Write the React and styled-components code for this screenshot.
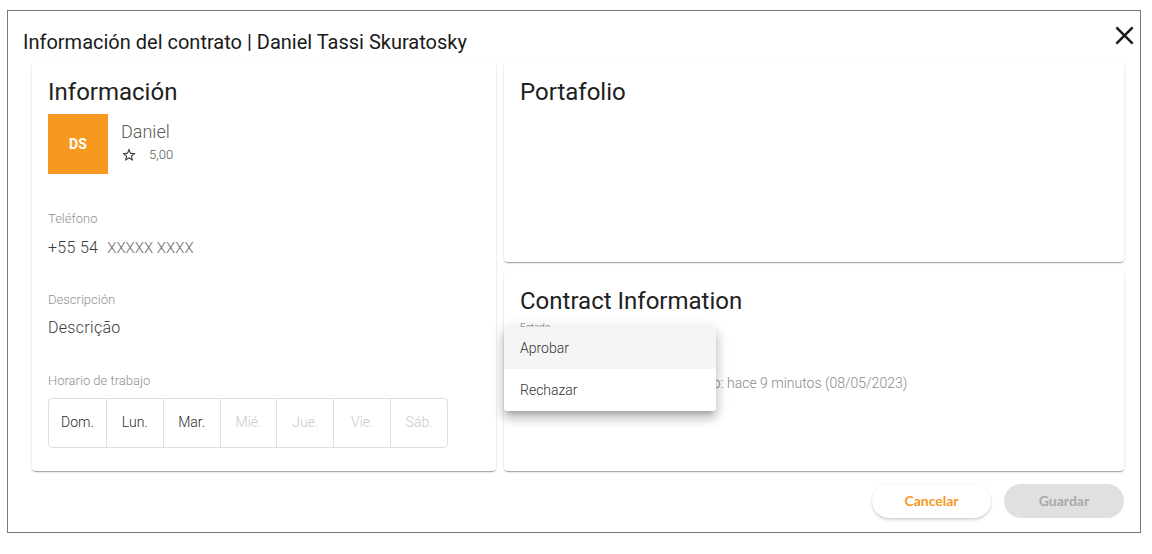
import React from "react";
import styled, { createGlobalStyle } from "styled-components";

const GlobalStyle = createGlobalStyle`
  html, body { margin: 0; padding: 0; background: #ffffff; }
  body { font-family: Roboto, "Liberation Sans", Arial, sans-serif; color: rgba(0,0,0,0.87); }
  * { box-sizing: border-box; }
`;

const Page = styled.div`
  padding: 10px 0 0 7px;
`;

const Dialog = styled.div`
  width: 1134px;
  border: 1px solid #7a7a7a;
  background: #fff;
  display: flex;
  flex-direction: column;
`;

const Header = styled.div`
  display: flex;
  align-items: center;
  justify-content: space-between;
  height: 51px;
  padding: 10px 0 0 15px;
`;

const Title = styled.h2`
  margin: 0;
  font-size: 20px;
  font-weight: 400;
  line-height: 22px;
  color: #1a1a1a;
`;

const CloseButton = styled.button`
  border: none;
  background: transparent;
  padding: 0;
  width: 32px;
  height: 32px;
  display: flex;
  align-items: center;
  justify-content: center;
  cursor: pointer;
  color: #1c1c1c;
  margin-top: -12px;
`;

const Content = styled.div`
  display: grid;
  grid-template-columns: 464px 620px;
  column-gap: 8px;
  height: 409px;
  padding: 0 16px 0 24px;
`;

const RightColumn = styled.div`
  display: flex;
  flex-direction: column;
  gap: 9px;
`;

const Card = styled.div`
  position: relative;
  background: #fff;
  border-radius: 4px;
  padding: 16px;
  flex: 1;
  box-shadow: 0px 2px 1px -1px rgba(0,0,0,0.2), 0px 1px 1px 0px rgba(0,0,0,0.14), 0px 1px 3px 0px rgba(0,0,0,0.12);
`;

const CardTitle = styled.h3`
  margin: 0;
  font-size: 24px;
  font-weight: 400;
  line-height: 29px;
  color: #212121;
`;

const Profile = styled.div`
  display: flex;
  margin-top: 7px;
`;

const Avatar = styled.div`
  width: 60px;
  height: 60px;
  background: #f7991e;
  color: #fff;
  font-weight: 700;
  font-size: 14px;
  display: flex;
  align-items: center;
  justify-content: center;
  letter-spacing: 0.2px;
`;

const ProfileInfo = styled.div`
  margin-left: 13px;
  padding-top: 7px;
`;

const Name = styled.div`
  font-size: 18px;
  font-weight: 300;
  line-height: 22px;
  color: #5a5a5a;
`;

const Rating = styled.div`
  display: flex;
  align-items: center;
  margin-top: 3px;
  font-size: 13px;
  font-weight: 300;
  color: #555;
  gap: 12px;
  line-height: 18px;
`;

const Field = styled.div`
  margin-top: ${(p) => p.$top}px;
`;

const Label = styled.div`
  font-size: 13px;
  font-weight: 300;
  line-height: 16px;
  color: #8f8f8f;
`;

const Value = styled.div`
  margin-top: ${(p) => p.$gap || 11}px;
  font-size: 16px;
  font-weight: 300;
  line-height: 20px;
  color: #3a3a3a;
  letter-spacing: 0.3px;
`;

const Masked = styled.span`
  font-size: 15px;
  color: #6d6d6d;
  margin-left: 9px;
  letter-spacing: 0;
`;

const Days = styled.div`
  display: grid;
  grid-template-columns: repeat(7, 1fr);
  width: 400px;
  height: 50px;
  margin-top: 9px;
  border: 1px solid #dedede;
  border-radius: 4px;
`;

const Day = styled.div`
  display: flex;
  align-items: center;
  justify-content: center;
  padding-bottom: 3px;
  font-size: 14px;
  font-weight: 300;
  color: ${(p) => (p.$active ? "#2b2b2b" : "#c9c9c9")};
  border-left: ${(p) => (p.$first ? "none" : "1px solid #dedede")};
`;

const SmallLabel = styled.div`
  margin-top: 6px;
  font-size: 10px;
  font-weight: 300;
  line-height: 12px;
  color: #777;
`;

const SelectSpace = styled.div`
  height: 38px;
`;

const Updated = styled.div`
  font-size: 14px;
  font-weight: 300;
  line-height: 18px;
  color: #8a8a8a;
  margin-top: 2px;
`;

const Menu = styled.ul`
  position: absolute;
  left: 0;
  top: 56px;
  width: 212px;
  margin: 0;
  padding: 0;
  list-style: none;
  background: #fff;
  border-radius: 4px;
  overflow: hidden;
  box-shadow: 0px 5px 5px -3px rgba(0,0,0,0.2), 0px 8px 10px 1px rgba(0,0,0,0.14), 0px 3px 14px 2px rgba(0,0,0,0.12);
`;

const MenuItem = styled.li`
  height: 42px;
  display: flex;
  align-items: center;
  padding-left: 16px;
  font-size: 14px;
  font-weight: 300;
  color: #333;
  background: ${(p) => (p.$hover ? "#f5f5f5" : "#fff")};
`;

const Footer = styled.div`
  display: flex;
  justify-content: flex-end;
  gap: 13px;
  padding: 13px 16px 14px 0;
`;

const Button = styled.button`
  width: ${(p) => p.$w}px;
  height: 34px;
  border: none;
  border-radius: 17px;
  font-family: Lato, "Liberation Sans", Arial, sans-serif;
  font-weight: 700;
  font-size: 14px;
  cursor: pointer;
  padding: 0 0 2px;
  background: ${(p) => (p.$primary ? "#e0e0e0" : "#fff")};
  color: ${(p) => (p.$primary ? "#a9a9a9" : "#f7991e")};
  box-shadow: ${(p) =>
    p.$primary ? "none" : "0px 2px 3px rgba(0,0,0,0.16), 0px 0px 2px rgba(0,0,0,0.08)"};
`;

const StarIcon = () => (
  <svg width="16" height="16" viewBox="0 0 24 24" fill="#333">
    <path d="M22 9.24l-7.19-.62L12 2 9.19 8.63 2 9.24l5.46 4.73L5.82 21 12 17.27 18.18 21l-1.63-7.03L22 9.24zM12 15.4l-3.76 2.27 1-4.28-3.32-2.88 4.38-.38L12 6.1l1.71 4.04 4.38.38-3.32 2.88 1 4.28L12 15.4z" />
  </svg>
);

const CloseIcon = () => (
  <svg width="31" height="31" viewBox="0 0 24 24" fill="currentColor">
    <path d="M19 6.41L17.59 5 12 10.59 6.41 5 5 6.41 10.59 12 5 17.59 6.41 19 12 13.41 17.59 19 19 17.59 13.41 12z" />
  </svg>
);

const days = [
  { label: "Dom.", active: true },
  { label: "Lun.", active: true },
  { label: "Mar.", active: true },
  { label: "Mié.", active: false },
  { label: "Jue.", active: false },
  { label: "Vie.", active: false },
  { label: "Sáb.", active: false },
];

export default function App() {
  return (
    <>
      <GlobalStyle />
      <Page>
        <Dialog>
          <Header>
            <Title>Información del contrato | Daniel Tassi Skuratosky</Title>
            <CloseButton aria-label="Cerrar">
              <CloseIcon />
            </CloseButton>
          </Header>
          <Content>
            <Card>
              <CardTitle>Información</CardTitle>
              <Profile>
                <Avatar>DS</Avatar>
                <ProfileInfo>
                  <Name>Daniel</Name>
                  <Rating>
                    <StarIcon />
                    <span>5,00</span>
                  </Rating>
                </ProfileInfo>
              </Profile>
              <Field $top={37}>
                <Label>Teléfono</Label>
                <Value>
                  +55 54<Masked>XXXXX XXXX</Masked>
                </Value>
              </Field>
              <Field $top={34}>
                <Label>Descripción</Label>
                <Value $gap={10}>Descrição</Value>
              </Field>
              <Field $top={35}>
                <Label>Horario de trabajo</Label>
                <Days>
                  {days.map((d, i) => (
                    <Day key={d.label} $active={d.active} $first={i === 0}>
                      {d.label}
                    </Day>
                  ))}
                </Days>
              </Field>
            </Card>
            <RightColumn>
              <Card>
                <CardTitle>Portafolio</CardTitle>
              </Card>
              <Card>
                <CardTitle>Contract Information</CardTitle>
                <SmallLabel>Estado</SmallLabel>
                <SelectSpace />
                <Updated>Última actualización del contrato: hace 9 minutos (08/05/2023)</Updated>
                <Menu>
                  <MenuItem $hover>Aprobar</MenuItem>
                  <MenuItem>Rechazar</MenuItem>
                </Menu>
              </Card>
            </RightColumn>
          </Content>
          <Footer>
            <Button $w={119}>Cancelar</Button>
            <Button $w={120} $primary>Guardar</Button>
          </Footer>
        </Dialog>
      </Page>
    </>
  );
}
